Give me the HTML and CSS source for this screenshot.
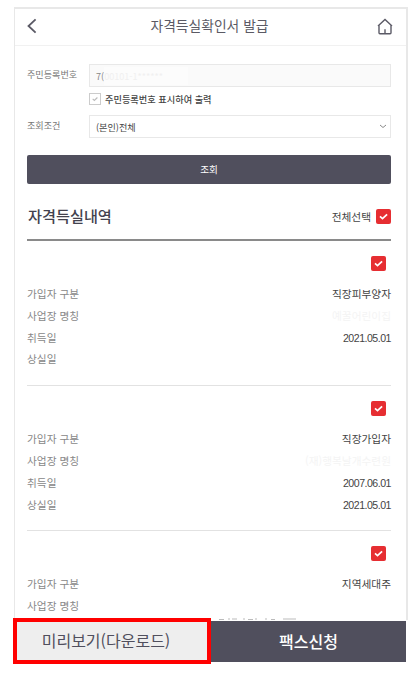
FILE: index.html
```html
<!DOCTYPE html>
<html lang="ko">
<head>
<meta charset="utf-8">
<title>자격득실확인서 발급</title>
<link rel="stylesheet" href="styles.css">
</head>
<body>
<svg class="defs" width="0" height="0"><symbol id="check" viewBox="0 0 15 15"><path d="M4 7.4l2.5 2.3 4.6-4.4" fill="none" stroke="currentColor" stroke-width="1.7"/></symbol></svg>
<main class="phone">
  <header class="header">
    <svg class="back" viewBox="0 0 10 16"><path d="M8.6 1.3L1.5 8l7.1 6.7" fill="none" stroke="#5b5a66" stroke-width="1.8"/></svg>
    <h1>자격득실확인서 발급</h1>
    <svg class="home" viewBox="0 0 16 17"><path d="M1 8L8 1.5 15 8M2 7v7.8q0 .9.9.9h10.2q.9 0 .9-.9V7M8 11.2v4.5" fill="none" stroke="#5b5a66" stroke-width="1.4"/></svg>
  </header>
  <section class="form">
    <div class="field"><label>주민등록번호</label><div class="box readonly"><span>7(</span><span class="mask">00101-1******</span></div></div>
    <div class="option"><span class="tick"><svg viewBox="0 0 15 15"><use href="#check"/></svg></span>주민등록번호 표시하여 출력</div>
    <div class="field"><label>조회조건</label><div class="box select">(본인)전체<svg viewBox="0 0 8 5"><path d="M1 1l3 2.5L7 1" fill="none" stroke="#8a8a8a" stroke-width="1"/></svg></div></div>
    <button class="search">조회</button>
  </section>
  <section class="history">
    <div class="heading"><h2>자격득실내역</h2><span class="all">전체선택</span><svg class="cb"><use href="#check"/></svg></div>
    <article class="item">
      <svg class="cb"><use href="#check"/></svg>
      <div class="row"><span>가입자 구분</span><b>직장피부양자</b></div>
      <div class="row"><span>사업장 명칭</span><b class="faint">예꿀어린이집</b></div>
      <div class="row"><span>취득일</span><b class="date">2021.05.01</b></div>
      <div class="row"><span>상실일</span></div>
    </article>
    <article class="item">
      <svg class="cb"><use href="#check"/></svg>
      <div class="row"><span>가입자 구분</span><b>직장가입자</b></div>
      <div class="row"><span>사업장 명칭</span><b class="faint">(재)행복날개수련원</b></div>
      <div class="row"><span>취득일</span><b class="date">2007.06.01</b></div>
      <div class="row"><span>상실일</span><b class="date">2021.05.01</b></div>
    </article>
    <article class="item last">
      <svg class="cb"><use href="#check"/></svg>
      <div class="row"><span>가입자 구분</span><b>지역세대주</b></div>
      <div class="row"><span>사업장 명칭</span></div>
      <svg class="cut" viewBox="0 0 80 4"><path d="M2 2.5h5M12 1v3M15 2h5M27 1v3M31 2.5h5M39 1v3M49 1v3M54 2.5h4M66 2h13" fill="none" stroke="#bbb" stroke-width="1"/></svg>
    </article>
  </section>
</main>
<footer class="actions">
  <button class="preview">미리보기(다운로드)</button>
  <button class="fax">팩스신청</button>
</footer>
</body>
</html>
```

FILE: styles.css
```css
* { box-sizing: border-box; }
body {
  margin: 0;
  height: 673px;
  overflow: hidden;
  background: #fff;
  color: #444;
  font-family: "Noto Sans CJK KR", sans-serif;
}
.defs { position: absolute; }
svg { display: block; flex: none; }
h1, h2 { margin: 0; }
button { border: 0; padding: 0; font-family: inherit; }
.phone {
  width: 394px;
  height: 613px;
  margin: 7px 0 0 14px;
  overflow: hidden;
  border: 2px solid #e8e8e8;
  border-left-width: 1px;
  border-bottom: 0;
}
.header {
  display: flex;
  align-items: center;
  justify-content: space-between;
  height: 37px;
  padding: 0 13px 2px 12px;
  border-bottom: 1px solid #f1f1f1;
}
.back { width: 10px; height: 16px; }
.home { width: 16px; height: 17px; }
h1 {
  margin: 0 0 3px 5px;
  font-size: 13.8px;
  line-height: 20px;
  font-weight: 400;
  color: #5b5a64;
  white-space: nowrap;
}
.form { padding: 18px 15px 0 12px; font-size: 9.1px; }
.field { display: flex; height: 23px; }
.field label { width: 62px; line-height: 21px; color: #777; white-space: nowrap; }
.box {
  flex: 1;
  display: flex;
  align-items: center;
  padding: 0 3px 0 6px;
  border: 1px solid #e8e8e8;
}
.readonly { background: #fafafa; color: #888; }
.mask { width: 84px; background: #fcfcfc; color: #f0f0f0; line-height: 18px; }
.select { justify-content: space-between; color: #444; }
.select svg { width: 8px; height: 5px; }
.option {
  display: flex;
  align-items: center;
  height: 28px;
  padding: 0 0 5px 62px;
  font-size: 9.2px;
  font-weight: 500;
  color: #444;
}
.tick { width: 12px; height: 12px; margin: 1px 4px 0 0; border: 1px solid #ccc; color: #bbb; }
.tick svg { width: 10px; height: 10px; }
.search {
  display: block;
  width: 100%;
  height: 29px;
  margin-top: 17px;
  border-radius: 2px;
  background: #504f5d;
  color: #fff;
  font-size: 9.6px;
  line-height: 27px;
}
.history { padding: 0 15px 0 12px; }
.heading {
  display: flex;
  align-items: center;
  height: 57px;
  padding-top: 9px;
  border-bottom: 2px solid #8a8a8a;
}
h2 { flex: 1; margin: 0 0 2px 1px; font-size: 15.2px; line-height: 20px; font-weight: 500; color: #43424e; }
.all { margin-right: 5px; font-size: 10.7px; font-weight: 400; }
.cb { width: 15px; height: 15px; border-radius: 2px; background: #e62e32; color: #fff; }
.item { height: 145.2px; padding-top: 15px; border-bottom: 1px solid #e2e2e2; }
.item .cb { margin: 0 5px 12px auto; }
.item.last { border: 0; }
.row {
  display: flex;
  justify-content: space-between;
  height: 21.8px;
  font-size: 10.7px;
  line-height: 21px;
}
.row span { color: #888; }
.row b { color: #444; font-weight: 400; }
.row .faint { color: #f4f4f4; font-weight: 400; }
.row .date { font-family: "Liberation Sans", sans-serif; font-size: 10.6px; line-height: 23px; letter-spacing: -.5px; }
.cut { width: 80px; height: 4px; margin-left: 190px; }
.actions { display: flex; width: 394px; height: 46px; margin: -2px 0 0 13px; }
.actions button { font-size: 16px; padding-bottom: 2px; }
.actions .preview {
  width: 198px;
  border: 4px solid #f00;
  background: #eee;
  color: #504f5d;
  padding-right: 12px;
}
.actions .fax {
  flex: 1;
  margin: 3px 1px 2px 0;
  background: #504f5d;
  color: #fff;
  font-weight: 500;
}
```
